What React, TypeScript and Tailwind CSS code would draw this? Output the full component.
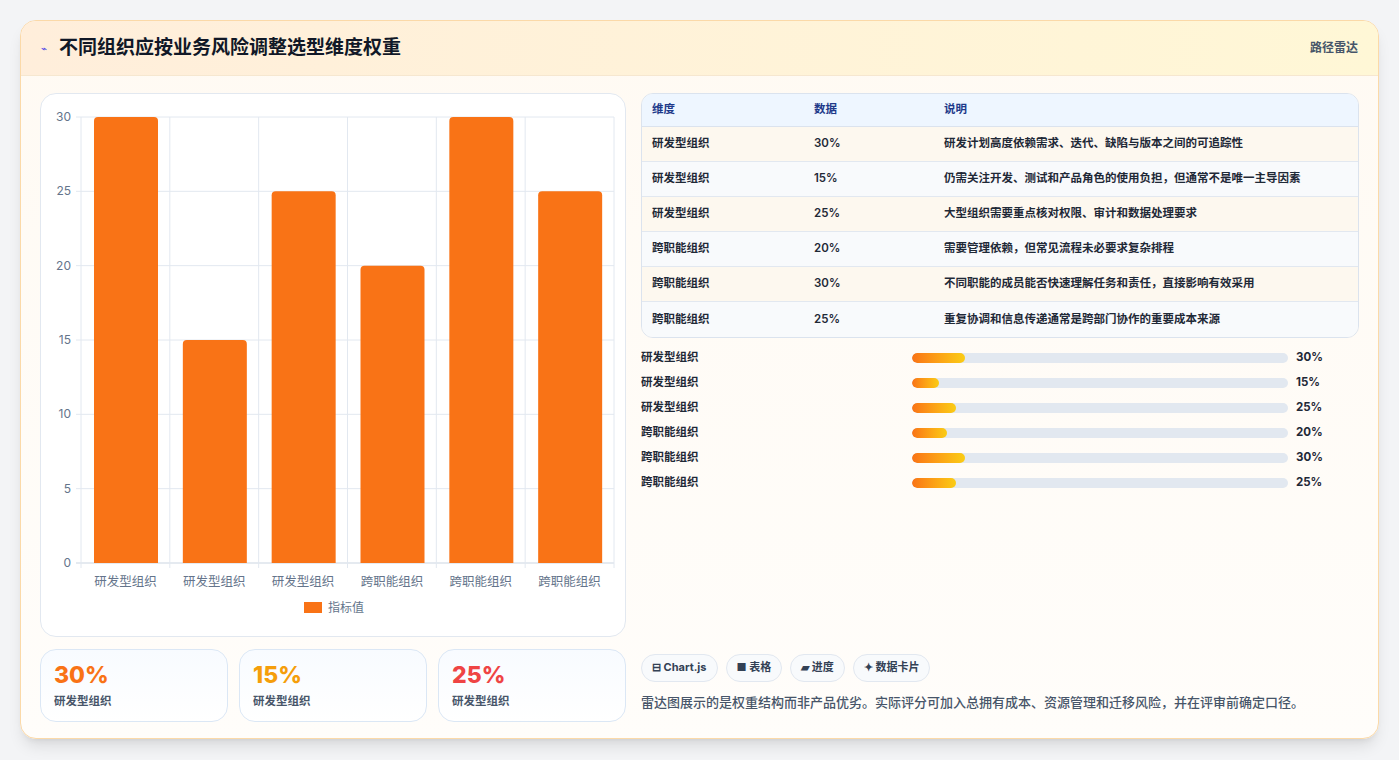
import React from "react";

const font = { fontFamily: "Inter, 'Noto Sans CJK SC', sans-serif" };

const rows = [
  { name: "研发型组织", v: 30, d: "研发计划高度依赖需求、迭代、缺陷与版本之间的可追踪性" },
  { name: "研发型组织", v: 15, d: "仍需关注开发、测试和产品角色的使用负担，但通常不是唯一主导因素" },
  { name: "研发型组织", v: 25, d: "大型组织需要重点核对权限、审计和数据处理要求" },
  { name: "跨职能组织", v: 20, d: "需要管理依赖，但常见流程未必要求复杂排程" },
  { name: "跨职能组织", v: 30, d: "不同职能的成员能否快速理解任务和责任，直接影响有效采用" },
  { name: "跨职能组织", v: 25, d: "重复协调和信息传递通常是跨部门协作的重要成本来源" },
];

function Chart() {
  const left = 40, right = 573, top = 23, bottom = 469;
  const cw = (right - left) / 6;
  const y = (v: number) => bottom - ((bottom - top) * v) / 30;
  return (
    <svg width="586" height="543" viewBox="0 0 586 543" style={font}>
      {[0, 5, 10, 15, 20, 25, 30].map((t) => (
        <g key={t}>
          <line x1={left - 5} x2={right} y1={y(t)} y2={y(t)} stroke={t === 0 ? "#cbd5e1" : "#e2e8f0"} />
          <text x={30} y={y(t) + 4} textAnchor="end" fontSize="12" fill="#64748b">{t}</text>
        </g>
      ))}
      {Array.from({ length: 7 }).map((_, i) => (
        <line key={i} x1={left + i * cw} x2={left + i * cw} y1={top} y2={bottom + 5} stroke="#e2e8f0" />
      ))}
      {rows.map((r, i) => (
        <g key={i}>
          <path
            d={`M${left + i * cw + 13} ${bottom} V${y(r.v) + 4} Q${left + i * cw + 13} ${y(r.v)} ${left + i * cw + 17} ${y(r.v)} H${left + i * cw + 73} Q${left + i * cw + 77} ${y(r.v)} ${left + i * cw + 77} ${y(r.v) + 4} V${bottom} Z`}
            fill="#f97316"
          />
          <text x={left + i * cw + cw / 2} y={492} textAnchor="middle" fontSize="12.5" fill="#64748b">{r.name}</text>
        </g>
      ))}
      <rect x={263} y={508} width={18} height={11} fill="#f97316" />
      <text x={287} y={518} fontSize="12" fill="#64748b">指标值</text>
    </svg>
  );
}

export default function App() {
  return (
    <div className="min-h-screen bg-[#f3f4f6] p-5 pb-0" style={font}>
      <div className="rounded-2xl border border-[#fbd9a8] bg-gradient-to-b from-[#fffaf3] to-[#fffdfa] shadow-lg overflow-hidden h-[719px]">
        <div className="h-[55px] flex items-center justify-between px-5 bg-gradient-to-r from-[#ffeedb] to-[#fff7d6] border-b border-[#f6e7d0]">
          <div className="flex items-center gap-3">
            <span className="text-[10px] text-[#4f46e5]">⌁</span>
            <h1 className="text-[19px] font-bold text-[#111827]">不同组织应按业务风险调整选型维度权重</h1>
          </div>
          <span className="text-[12px] font-semibold text-[#475569]">路径雷达</span>
        </div>
        <div className="flex gap-[15px] px-[19px] pt-[17px]">
          <div className="w-[586px] flex flex-col gap-3">
            <div className="h-[544px] rounded-2xl border border-[#e2e8f0] bg-white"><Chart /></div>
            <div className="grid grid-cols-3 gap-[11px]">
              {[
                ["30%", "text-[#f97316]"],
                ["15%", "text-[#f59e0b]"],
                ["25%", "text-[#ef4444]"],
              ].map(([v, c]) => (
                <div key={v} className="h-[73px] rounded-2xl border border-[#dbe7f5] bg-gradient-to-b from-[#f8fbff] to-white px-[13px] pt-[11px]">
                  <div className={`text-[23px] font-extrabold leading-7 ${c}`}>{v}</div>
                  <div className="text-[11.5px] font-semibold text-[#475569] mt-1">研发型组织</div>
                </div>
              ))}
            </div>
          </div>
          <div className="flex-1 flex flex-col">
            <div className="rounded-xl border border-[#dbe3ee] overflow-hidden text-[11.5px] font-semibold">
              <div className="flex h-[33px] items-center bg-[#eef6ff] text-[#1e3a8a] border-b border-[#dbe3ee]">
                <div className="w-[172px] pl-[10px]">维度</div>
                <div className="w-[130px]">数据</div>
                <div>说明</div>
              </div>
              {rows.map((r, i) => (
                <div key={i} className={`flex h-[35px] items-center text-[#1f2937] ${i < 5 ? "border-b border-[#e2e8f0]" : ""} ${i % 2 === 0 ? "bg-[#fdf8ef]" : "bg-[#f8fafc]"}`}>
                  <div className="w-[172px] pl-[10px]">{r.name}</div>
                  <div className="w-[130px]">{r.v}%</div>
                  <div>{r.d}</div>
                </div>
              ))}
            </div>
            <div className="mt-[11px] flex flex-col gap-[7px]">
              {rows.map((r, i) => (
                <div key={i} className="flex items-center h-[18px] text-[11.5px] font-semibold text-[#1f2937]">
                  <div className="w-[271px]">{r.name}</div>
                  <div className="w-[376px] h-[10px] rounded-full bg-[#e2e8f0] overflow-hidden">
                    <div className="h-full rounded-full bg-gradient-to-r from-[#f97316] to-[#facc15]" style={{ width: `${r.v * 0.47}%` }} />
                  </div>
                  <div className="ml-2 font-bold">{r.v}%</div>
                </div>
              ))}
            </div>
            <div className="mt-auto flex gap-2 text-[11px] font-bold text-[#334155]">
              {["⊟ Chart.js", "■ 表格", "▰ 进度", "✦ 数据卡片"].map((t) => (
                <span key={t} className="h-[28px] px-[10px] flex items-center rounded-full border border-[#e2e8f0] bg-[#f8fafc]">{t}</span>
              ))}
            </div>
            <p className="mt-[11px] text-[13px] font-medium text-[#475569] mb-[10px]">雷达图展示的是权重结构而非产品优劣。实际评分可加入总拥有成本、资源管理和迁移风险，并在评审前确定口径。</p>
          </div>
        </div>
      </div>
    </div>
  );
}
